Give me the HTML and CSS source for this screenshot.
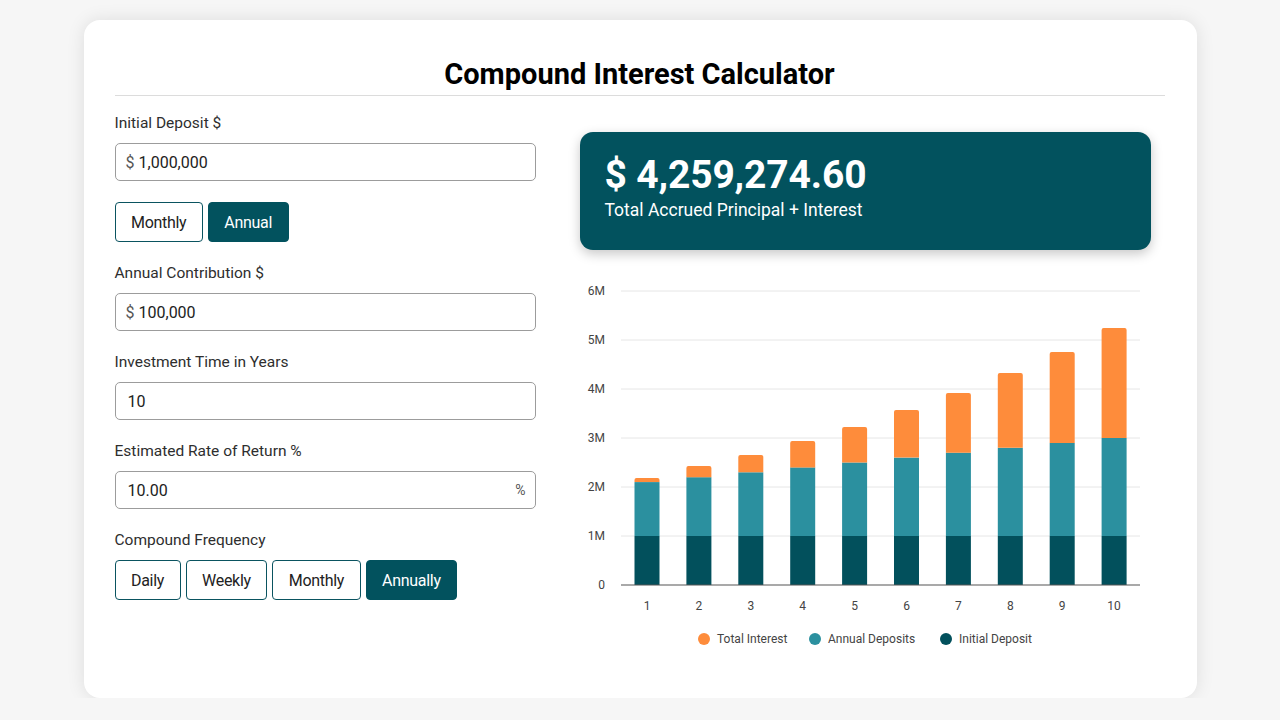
FILE: index.html
```html
<!DOCTYPE html>
<html lang="en">
<head>
<meta charset="utf-8">
<title>Compound Interest Calculator</title>
<link rel="stylesheet" href="styles.css">
</head>
<body>
<main class="card">
  <h1 class="title">Compound Interest Calculator</h1>
  <div class="layout">
    <section class="form">
      <div class="field">
        <div class="label">Initial Deposit $</div>
        <div class="input"><span class="prefix">$</span><input class="value" type="text" value="1,000,000"></div>
      </div>
      <div class="btn-group">
        <button class="btn">Monthly</button>
        <button class="btn active">Annual</button>
      </div>
      <div class="field">
        <div class="label">Annual Contribution $</div>
        <div class="input"><span class="prefix">$</span><input class="value" type="text" value="100,000"></div>
      </div>
      <div class="field">
        <div class="label">Investment Time in Years</div>
        <div class="input plain"><input class="value" type="text" value="10"></div>
      </div>
      <div class="field">
        <div class="label">Estimated Rate of Return %</div>
        <div class="input plain"><input class="value" type="text" value="10.00"><span class="suffix">%</span></div>
      </div>
      <div class="field">
        <div class="label">Compound Frequency</div>
        <div class="btn-group">
          <button class="btn">Daily</button>
          <button class="btn">Weekly</button>
          <button class="btn">Monthly</button>
          <button class="btn active">Annually</button>
        </div>
      </div>
    </section>
    <section class="results">
      <div class="total">
        <div class="amount">$ 4,259,274.60</div>
        <div class="caption">Total Accrued Principal + Interest</div>
      </div>
      <svg class="chart" width="571" height="390" viewBox="0 0 571 390">
        <g class="grid">
          <line x1="41" x2="560" y1="20" y2="20"/>
          <line x1="41" x2="560" y1="69" y2="69"/>
          <line x1="41" x2="560" y1="118" y2="118"/>
          <line x1="41" x2="560" y1="167" y2="167"/>
          <line x1="41" x2="560" y1="216" y2="216"/>
          <line x1="41" x2="560" y1="265" y2="265"/>
        </g>
        <g class="ylabels">
          <text x="25" y="24">6M</text>
          <text x="25" y="73">5M</text>
          <text x="25" y="122">4M</text>
          <text x="25" y="171">3M</text>
          <text x="25" y="220">2M</text>
          <text x="25" y="269">1M</text>
          <text x="25" y="318">0</text>
        </g>
        <g class="bars">
          <rect class="init" x="54.5" y="265" width="25" height="49"/>
          <rect class="dep" x="54.5" y="211.1" width="25" height="53.9"/>
          <path class="int" d="M54.5 211.1 V209 a2 2 0 0 1 2 -2 H77.5 a2 2 0 0 1 2 2 V211.1 Z"/>

          <rect class="init" x="106.4" y="265" width="25" height="49"/>
          <rect class="dep" x="106.4" y="206.2" width="25" height="58.8"/>
          <path class="int" d="M106.4 206.2 V197 a2 2 0 0 1 2 -2 H129.4 a2 2 0 0 1 2 2 V206.2 Z"/>

          <rect class="init" x="158.3" y="265" width="25" height="49"/>
          <rect class="dep" x="158.3" y="201.3" width="25" height="63.7"/>
          <path class="int" d="M158.3 201.3 V186 a2 2 0 0 1 2 -2 H181.3 a2 2 0 0 1 2 2 V201.3 Z"/>

          <rect class="init" x="210.2" y="265" width="25" height="49"/>
          <rect class="dep" x="210.2" y="196.4" width="25" height="68.6"/>
          <path class="int" d="M210.2 196.4 V172 a2 2 0 0 1 2 -2 H233.2 a2 2 0 0 1 2 2 V196.4 Z"/>

          <rect class="init" x="262.1" y="265" width="25" height="49"/>
          <rect class="dep" x="262.1" y="191.5" width="25" height="73.5"/>
          <path class="int" d="M262.1 191.5 V158 a2 2 0 0 1 2 -2 H285.1 a2 2 0 0 1 2 2 V191.5 Z"/>

          <rect class="init" x="314" y="265" width="25" height="49"/>
          <rect class="dep" x="314" y="186.6" width="25" height="78.4"/>
          <path class="int" d="M314 186.6 V141 a2 2 0 0 1 2 -2 H337 a2 2 0 0 1 2 2 V186.6 Z"/>

          <rect class="init" x="365.9" y="265" width="25" height="49"/>
          <rect class="dep" x="365.9" y="181.7" width="25" height="83.3"/>
          <path class="int" d="M365.9 181.7 V124 a2 2 0 0 1 2 -2 H388.9 a2 2 0 0 1 2 2 V181.7 Z"/>

          <rect class="init" x="417.8" y="265" width="25" height="49"/>
          <rect class="dep" x="417.8" y="176.8" width="25" height="88.2"/>
          <path class="int" d="M417.8 176.8 V104 a2 2 0 0 1 2 -2 H440.8 a2 2 0 0 1 2 2 V176.8 Z"/>

          <rect class="init" x="469.7" y="265" width="25" height="49"/>
          <rect class="dep" x="469.7" y="171.9" width="25" height="93.1"/>
          <path class="int" d="M469.7 171.9 V83 a2 2 0 0 1 2 -2 H492.7 a2 2 0 0 1 2 2 V171.9 Z"/>

          <rect class="init" x="521.6" y="265" width="25" height="49"/>
          <rect class="dep" x="521.6" y="167" width="25" height="98"/>
          <path class="int" d="M521.6 167 V59 a2 2 0 0 1 2 -2 H544.6 a2 2 0 0 1 2 2 V167 Z"/>
        </g>
        <line class="axis" x1="41" x2="560" y1="314" y2="314"/>
        <g class="xlabels">
          <text x="67" y="339">1</text>
          <text x="118.9" y="339">2</text>
          <text x="170.8" y="339">3</text>
          <text x="222.7" y="339">4</text>
          <text x="274.6" y="339">5</text>
          <text x="326.5" y="339">6</text>
          <text x="378.4" y="339">7</text>
          <text x="430.3" y="339">8</text>
          <text x="482.2" y="339">9</text>
          <text x="534.1" y="339">10</text>
        </g>
        <g class="legend">
          <circle class="int" cx="124" cy="368" r="6"/>
          <text x="137" y="372">Total Interest</text>
          <circle class="dep" cx="235" cy="368" r="6"/>
          <text x="248" y="372">Annual Deposits</text>
          <circle class="init" cx="366" cy="368" r="6"/>
          <text x="379" y="372">Initial Deposit</text>
        </g>
      </svg>
    </section>
  </div>
</main>
</body>
</html>
```
FILE: styles.css
```css
* { box-sizing: border-box; }

html, body {
  margin: 0;
  padding: 0;
}

body {
  background: #f6f6f6;
  font-family: Roboto, "Liberation Sans", Arial, sans-serif;
  color: #222;
  padding-top: 20px;
}

.card {
  width: 1113px;
  height: 678px;
  margin: 0 auto;
  background: #fff;
  border-radius: 16px;
  box-shadow: 0 0 18px rgba(0, 0, 0, 0.10);
  padding: 37px 32px 0 31px;
}

.title {
  margin: 0;
  font-size: 29px;
  line-height: 34px;
  font-weight: 700;
  color: #000;
  text-align: center;
  padding-bottom: 4px;
  border-bottom: 1px solid #dcdcdc;
}

.layout {
  display: grid;
  grid-template-columns: 421px 1fr;
  column-gap: 44px;
  padding-top: 17px;
}

.form {
  display: flex;
  flex-direction: column;
  gap: 21px;
}

.label {
  font-size: 15.5px;
  line-height: 20px;
  color: #2e2e2e;
  margin-bottom: 10px;
}

.input {
  display: flex;
  align-items: center;
  height: 38px;
  border: 1px solid #9c9c9c;
  border-radius: 5px;
  padding: 0 10px;
  background: #fff;
}

.input.plain {
  padding: 0 9px 0 12px;
}

.prefix {
  font-size: 16px;
  color: #555;
  margin-right: 4px;
}

.suffix {
  font-size: 14px;
  color: #555;
}

.value {
  flex: 1;
  min-width: 0;
  border: none;
  outline: none;
  padding: 0;
  font-family: inherit;
  font-size: 16px;
  color: #222;
  background: transparent;
}

.btn-group {
  display: flex;
  gap: 5px;
}

.btn {
  height: 40px;
  padding: 0 15.5px;
  border: 1px solid #0a5360;
  border-radius: 4px;
  background: #fff;
  font-family: inherit;
  font-size: 16px;
  letter-spacing: -0.3px;
  color: #222;
}

.btn.active {
  background: #02525e;
  border-color: #02525e;
  color: #fff;
}

.results {
  padding-top: 19px;
}

.total {
  width: 571px;
  background: #02525e;
  border-radius: 13px;
  color: #fff;
  padding: 19px 25px 29px;
  box-shadow: 0 4px 12px rgba(0, 0, 0, 0.22);
}

.amount {
  font-size: 39px;
  line-height: 48px;
  font-weight: 700;
  letter-spacing: -0.15px;
}

.caption {
  font-size: 17.5px;
  line-height: 22px;
}

.chart {
  display: block;
  margin-top: 21px;
  font-family: Roboto, "Liberation Sans", Arial, sans-serif;
}

.grid line {
  stroke: #e6e6e6;
  stroke-width: 1;
}

.axis {
  stroke: #555;
  stroke-width: 1.2;
}

.ylabels text {
  font-size: 12px;
  fill: #444;
  text-anchor: end;
}

.xlabels text {
  font-size: 12px;
  fill: #444;
  text-anchor: middle;
}

.legend text {
  font-size: 12px;
  fill: #444;
}

.init { fill: #02505c; }
.dep { fill: #2b909f; }
.int { fill: #fe8c3b; }
```
